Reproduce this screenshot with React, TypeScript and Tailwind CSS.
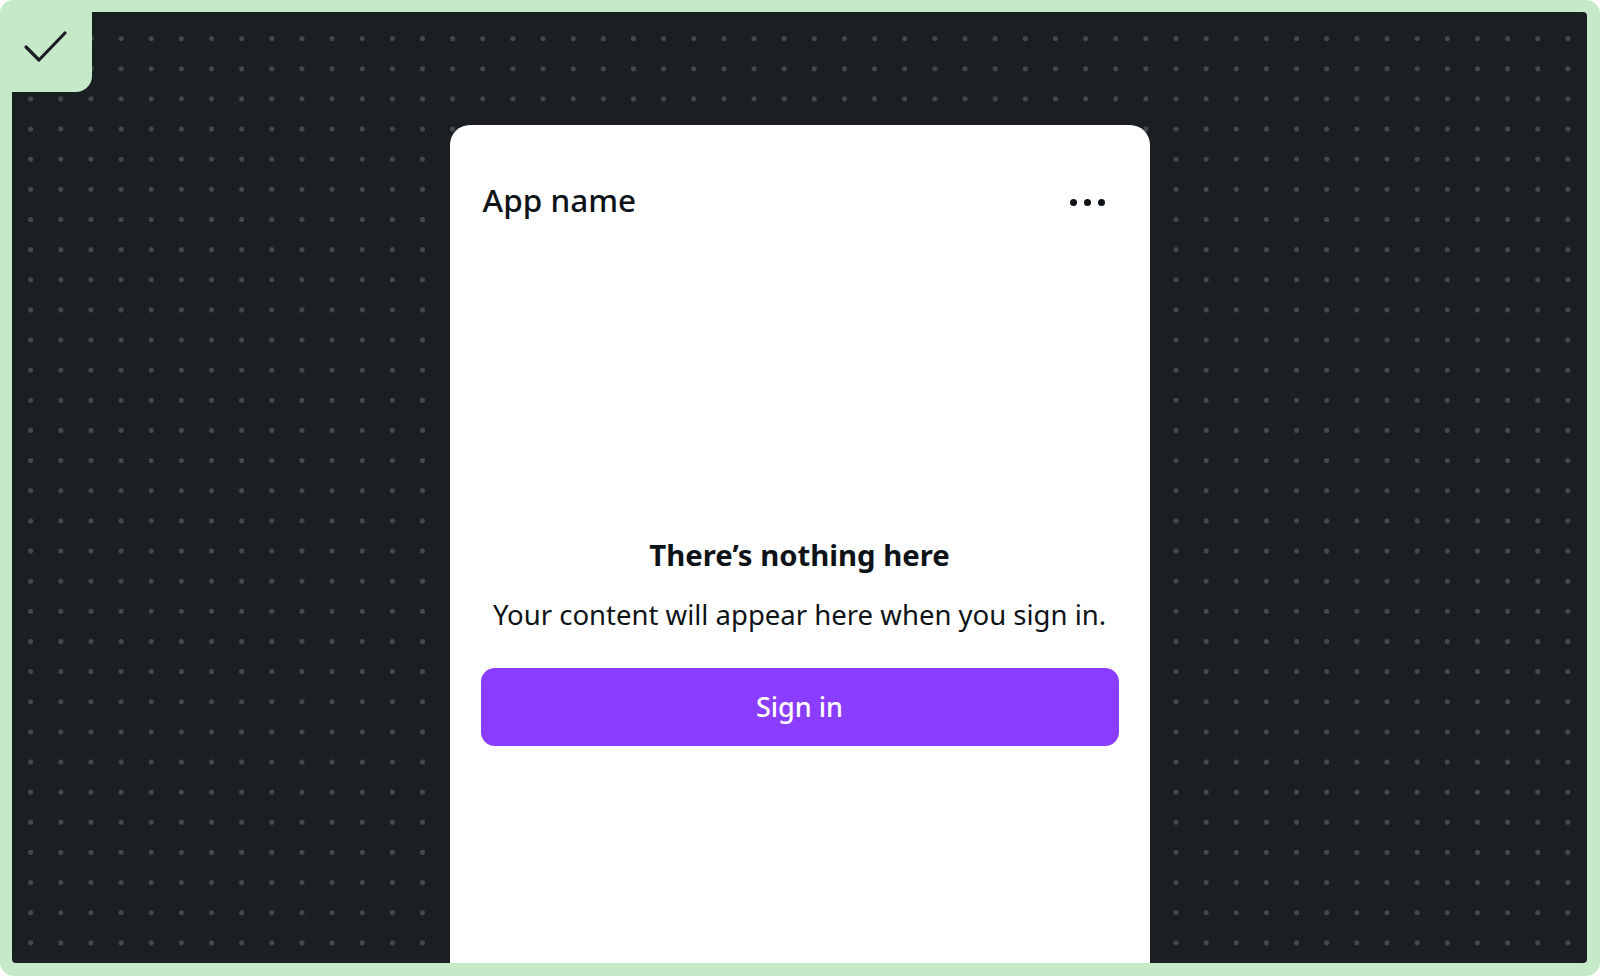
export default function App() {
  return (
    <div className="relative h-[976px] w-[1600px] overflow-hidden rounded-[14px] bg-[#c6eac7] pl-3 pt-3 pr-[13px] pb-[13px] font-['Noto_Sans',sans-serif]">
      <div className="flex h-full w-full justify-center overflow-hidden rounded-[4px] bg-[#1b1e23] bg-[radial-gradient(circle,#45484d_2.2px,transparent_2.9px)] bg-[size:30.15px_30.15px] bg-[position:3.6px_11.6px] pt-[113px]">
        <div className="flex w-[700px] flex-col rounded-t-[20px] bg-white pt-[55px]">
          <div className="flex h-10 items-center justify-between pl-[33px] pr-[45px]">
            <span className="text-[31.5px] font-medium text-[#0e1318]">App name</span>
            <div className="mt-[4px] flex gap-[6.7px]">
              <span className="h-[7px] w-[7px] rounded-full bg-[#0e1318]" />
              <span className="h-[7px] w-[7px] rounded-full bg-[#0e1318]" />
              <span className="h-[7px] w-[7px] rounded-full bg-[#0e1318]" />
            </div>
          </div>

          <h1 className="mt-[317px] text-center text-[29.3px] leading-[36px] font-bold text-[#0e1318]">There’s nothing here</h1>
          <p className="mt-[24px] text-center text-[27.5px] leading-[36px] text-[#0e1318]">
            Your content will appear here when you sign in.
          </p>

          <button
            type="button"
            className="mx-[31px] mt-[35px] h-[78px] rounded-[14px] bg-[#8b3dff] text-[27px] font-medium text-white"
          >
            Sign in
          </button>
        </div>
      </div>

      {/* selected badge */}
      <div className="absolute left-0 top-0 flex h-[92px] w-[92px] rounded-br-[16px] bg-[#c6eac7]">
        <svg width="92" height="92" viewBox="0 0 92 92" fill="none">
          <polyline points="26,47 39,60 65,33" stroke="#1b1e23" strokeWidth="3.2" strokeLinecap="round" strokeLinejoin="round" />
        </svg>
      </div>
    </div>
  );
}
